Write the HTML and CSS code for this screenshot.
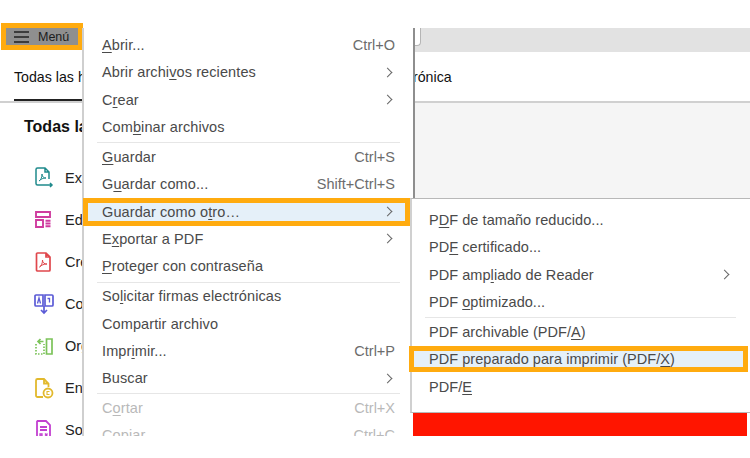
FILE: index.html
```html
<!DOCTYPE html>
<html lang="es">
<head>
    <meta charset="UTF-8">
    <title>Guardar como otro</title>
    <link rel="stylesheet" href="styles.css">
</head>
<body>
    <div class="app">
        <div class="header">
            <div class="menu-button">
                <svg class="burger" width="15" height="12" viewBox="0 0 15 12"><path d="M0 1h15M0 6h15M0 11h15" stroke="#222" stroke-width="1.5"/></svg>
                <span>Menú</span>
            </div>
            <div class="strip"><div class="strip-tab"></div></div>
        </div>

        <div class="tabs">
            <div class="tab-active">Todas las h</div>
            <div class="tab-rest">rónica</div>
        </div>

        <div class="content">
            <div class="sidebar">
                <h2 class="sidebar-title">Todas la</h2>
                <div class="tool"><svg width="20" height="22" viewBox="0 0 20 22" fill="none" stroke="#1f8a8c" stroke-width="1.5"><path d="M11 18H3.500a1.500 1.500 0 0 1-1.500-1.500v-14A1.500 1.500 0 0 1 3.500 1H11l4 4v7M11 1v4h4"/><path d="M5 14c2-1 3-4 3-7 0 3 2 4 4 4-3 0-5 1-7 3z" stroke-width="1"/><path d="M11 18h7m-2-2 2 2-2 2"/></svg><span>Ex</span></div>
                <div class="tool"><svg width="20" height="22" viewBox="0 0 20 22" fill="none" stroke="#cf3c9f" stroke-width="1.9"><path d="M2 3h14v5H2zM2 11h7v7H2zM11.500 11.800h5M11.500 14.500h5M11.500 17.200h5"/></svg><span>Ed</span></div>
                <div class="tool"><svg width="20" height="22" viewBox="0 0 20 22" fill="none" stroke="#e0474c" stroke-width="1.7"><path d="M3.500 2H12l4 4v13a1 1 0 0 1-1 1H3.500a1 1 0 0 1-1-1V3a1 1 0 0 1 1-1zM12 2v4h4"/><path d="M5.500 16c2-1 3-4 3-7 0 3 2 4 4.500 4-3 0-5.500 1-7.500 3z" stroke-width="1"/></svg><span>Cre</span></div>
                <div class="tool"><svg width="20" height="22" viewBox="0 0 20 22" fill="none" stroke="#5b5bd6" stroke-width="1.7"><path d="M9 2H2a1 1 0 0 0-1 1v9a1 1 0 0 0 1 1h7zM11 2h7a1 1 0 0 1 1 1v9a1 1 0 0 1-1 1h-7z"/><path d="M10 13v7m-3-3 3 3 3-3"/><path d="M3.500 10.500 5 5l1.500 5.500M13.500 5.500h2v4" stroke-width="1.300"/></svg><span>Co</span></div>
                <div class="tool"><svg width="20" height="22" viewBox="0 0 20 22" fill="none" stroke="#7cc35a" stroke-width="1.7"><path d="M12.500 4H18v15h-5.500z"/><path d="M2 9v10h8V9" stroke-dasharray="1.500 1.500"/><path d="M9.500 6.500H4.500m2-2.500-2.500 2.500L6.500 9"/></svg><span>Org</span></div>
                <div class="tool"><svg width="20" height="22" viewBox="0 0 20 22" fill="none" stroke="#e2b92d" stroke-width="1.8"><path d="M9 20H3.500A1.500 1.500 0 0 1 2 18.500v-15A1.500 1.500 0 0 1 3.500 2H10l4.500 4.500V10M10 2v4.500h4.500"/><circle cx="14" cy="16" r="4.500"/><path d="M15.500 14.500h-2.500v3h2.500" stroke-width="1.100"/></svg><span>En</span></div>
                <div class="tool"><svg width="20" height="22" viewBox="0 0 20 22" fill="none" stroke="#c23fd0" stroke-width="1.8"><path d="M3.500 2H12l4 4v14H3V2.500zM6 8h7M6 11h7"/><path d="M6 15h2v2H6zM11 14.500l2.500 3M13.500 14.500l-2.500 3" stroke-width="1.300"/></svg><span>So</span></div>
            </div>
            <div class="canvas">
                <div class="canvas-fill"></div>
                <div class="canvas-red"></div>
            </div>
        </div>

        <div class="menu">
            <div class="item"><span><u>A</u>brir...</span><span class="key">Ctrl+O</span></div>
            <div class="item"><span>Abrir archi<u>v</u>os recientes</span><span class="arrow"></span></div>
            <div class="item"><span>C<u>r</u>ear</span><span class="arrow"></span></div>
            <div class="item"><span>Com<u>b</u>inar archivos</span></div>
            <div class="sep"></div>
            <div class="item"><span><u>G</u>uardar</span><span class="key">Ctrl+S</span></div>
            <div class="item"><span>G<u>u</u>ardar como...</span><span class="key">Shift+Ctrl+S</span></div>
            <div class="item item-marked"><span>Guardar como o<u>t</u>ro…</span><span class="arrow"></span></div>
            <div class="item"><span>E<u>x</u>portar a PDF</span><span class="arrow"></span></div>
            <div class="item"><span><u>P</u>roteger con contraseña</span></div>
            <div class="sep"></div>
            <div class="item"><span>So<u>l</u>icitar firmas electrónicas</span></div>
            <div class="item"><span>Compartir archivo</span></div>
            <div class="item"><span>Impr<u>i</u>mir...</span><span class="key">Ctrl+P</span></div>
            <div class="item"><span>Buscar</span><span class="arrow"></span></div>
            <div class="sep"></div>
            <div class="item item-off"><span>C<u>o</u>rtar</span><span class="key">Ctrl+X</span></div>
            <div class="item item-off"><span>Copiar</span><span class="key">Ctrl+C</span></div>
        </div>

        <div class="submenu">
            <div class="item"><span>P<u>D</u>F de tamaño reducido...</span></div>
            <div class="item"><span>PD<u>F</u> certificado...</span></div>
            <div class="item"><span>PDF amp<u>l</u>iado de Reader</span><span class="arrow"></span></div>
            <div class="item"><span>PDF <u>o</u>ptimizado...</span></div>
            <div class="sep"></div>
            <div class="item"><span>PDF archivable (PDF/<u>A</u>)</span></div>
            <div class="item item-marked"><span>PDF preparado para imprimir (PDF/<u>X</u>)</span></div>
            <div class="item"><span>PDF/<u>E</u></span></div>
        </div>
    </div>
</body>
</html>
```

FILE: styles.css
```css
html, body {
    margin: 0;
    background-color: #fff;
}
body {
    height: 458px;
    overflow: hidden;
    font-family: "Liberation Sans", Arial, sans-serif;
}
.app {
    position: relative;
    width: 750px;
    height: 436px;
    overflow: hidden;
}
.header {
    display: flex;
    justify-content: space-between;
    height: 29px;
    margin-top: 23px;
}
.menu-button {
    display: flex;
    align-items: center;
    gap: 9px;
    box-sizing: border-box;
    width: 82px;
    height: 27px;
    margin-left: 1px;
    padding-left: 8px;
    border: 5px solid #ffab0f;
    background-color: #8f8f8f;
    font-size: 12.5px;
    color: #1c1c1c;
}
.burger {
    flex: none;
}
.strip {
    align-self: flex-end;
    width: 335px;
    height: 24px;
    background-color: #e2e2e2;
}
.strip-tab {
    box-sizing: border-box;
    width: 6px;
    height: 18px;
    background-color: #fff;
    border-right: 1px solid #b5b5b5;
    border-bottom: 1px solid #b5b5b5;
    border-bottom-right-radius: 4px;
}
.tabs {
    display: flex;
    justify-content: space-between;
    box-sizing: border-box;
    height: 51px;
    padding-left: 14px;
    border-bottom: 2px solid #d0d0d0;
    font-size: 14.2px;
    color: #111;
}
.tab-active {
    width: 150px;
    height: 47px;
    line-height: 50px;
    white-space: nowrap;
    border-bottom: 2px solid #222;
}
.tab-rest {
    width: 337px;
    line-height: 50px;
}
.content {
    display: flex;
    height: 333px;
}
.sidebar {
    width: 414px;
    padding-left: 24px;
    box-sizing: border-box;
}
.sidebar-title {
    margin: 14px 0 20px;
    font-size: 16px;
    line-height: 20px;
    color: #111;
    white-space: nowrap;
}
.tool {
    display: flex;
    align-items: center;
    gap: 11px;
    height: 42px;
    margin-left: 10px;
    font-size: 14.5px;
    color: #222;
}
.tool svg {
    flex: none;
}
.canvas {
    display: flex;
    flex-direction: column;
    flex: 1;
}
.canvas-fill {
    flex: 1;
    background-color: #f5f5f5;
}
.canvas-red {
    position: relative;
    z-index: 1;
    width: 334px;
    height: 23px;
    margin-left: -1px;
    background-color: #ff1500;
}

/* menus sit over the page */
.menu {
    position: absolute;
    top: 28px;
    left: 82px;
    box-sizing: border-box;
    width: 333px;
    height: 420px;
    padding: 3.5px 0 0 2px;
    background-color: #fff;
    border-left: 2px solid #cfcfcf;
    border-right: 2px solid #8e8e8e;
}
.submenu {
    position: absolute;
    z-index: 2;
    top: 198px;
    left: 410px;
    box-sizing: border-box;
    width: 340px;
    height: 215px;
    padding: 7.5px 0 0 5px;
    background-color: #fff;
    border-top: 1px solid #b8b8b8;
    border-left: 2px solid #d0d0d0;
    border-bottom: 1px solid #b8b8b8;
}
.item {
    display: flex;
    align-items: center;
    justify-content: space-between;
    box-sizing: border-box;
    height: 27.3px;
    padding: 0 18px 0 16px;
    font-size: 14.5px;
    letter-spacing: 0.1px;
    color: #4a4a4a;
    white-space: nowrap;
}
.submenu .item {
    padding: 0 18px 0 12px;
    letter-spacing: 0.05px;
}
.key {
    letter-spacing: 0;
    color: #6c6c6c;
}
.item-off,
.item-off .key {
    color: #b9b9b9;
}
.item u {
    text-decoration-thickness: 1px;
    text-underline-offset: 2px;
}
.arrow {
    width: 6px;
    height: 6px;
    margin-right: 4.5px;
    border-top: 1.5px solid #666;
    border-right: 1.5px solid #666;
    transform: rotate(45deg);
}
.sep {
    height: 1px;
    margin: 1.7px 13px 0 11px;
    background-color: #e6e6e6;
}
.submenu .sep {
    margin: 1.7px 14px 0 8px;
}
.item-marked {
    background-color: #e5f0f9;
    outline: 5px solid #ffab0f;
    outline-offset: -5px;
}
.menu .item-marked {
    width: 327px;
    height: 28px;
    margin: -0.35px 0 -0.35px -3px;
    padding: 0 15px 0 19px;
}
.submenu .item-marked {
    width: 339px;
    height: 26px;
    margin: 0.65px 0 0.65px -8px;
    padding: 0 18px 0 20px;
}
```
